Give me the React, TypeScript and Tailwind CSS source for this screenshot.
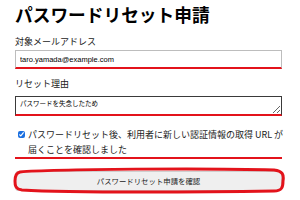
import React from "react";

export default function App() {
  return (
    <div className="w-[300px] h-[200px] bg-white overflow-hidden pl-[15px] pr-[18px] pt-[3px] text-[#1a1a1a] font-['Noto_Sans_CJK_JP','Noto_Sans',sans-serif]">
      <h1 className="text-[17.7px] leading-[22px] font-bold text-black">パスワードリセット申請</h1>
      <label className="block mt-[11px] text-[9px] leading-[12px]">対象メールアドレス</label>
      <input
        readOnly
        value="taro.yamada@example.com"
        className="mt-[2px] block w-full h-[19px] border border-[#bdbdbd] border-b-2 border-b-[#e3131b] px-[4px] text-[7.5px] text-black font-['Liberation_Sans',sans-serif] outline-none"
      />
      <label className="block mt-[9px] text-[9px] leading-[12px]">リセット理由</label>
      <textarea
        readOnly
        value="パスワードを失念したため"
        className="mt-[6px] block w-full h-[20px] border border-[#3a3a3a] border-b-2 border-b-[#e3131b] px-[4px] py-[2px] text-[6.5px] leading-[9px] text-black outline-none"
      />
      <div className="mt-[11px] flex items-start border-b-2 border-[#e3131b]">
        <input
          type="checkbox"
          checked
          readOnly
          className="ml-[3px] mt-[4px] w-[7px] h-[7px] shrink-0 accent-[#1a6fe0]"
        />
        <span className="ml-[3px] text-[9px] leading-[15px]">
          <span className="whitespace-nowrap">パスワードリセット後、利用者に新しい認証情報の取得 URL が</span>
          <br />
          届くことを確認しました
        </span>
      </div>
      <div className="relative mt-[12px]">
        <button className="block w-full h-[20px] bg-[#efefef] border border-[#cfcfcf] rounded-[3px] text-[7.4px] text-[#222]">
          パスワードリセット申請を確認
        </button>
        <svg
          className="absolute left-[-3px] top-[-4px] pointer-events-none"
          width="274"
          height="28"
          viewBox="0 0 274 28"
        >
          <path
            d="M 8 5 C 40 2, 200 1, 262 3 C 271 4, 272 8, 271 14 C 271 20, 270 24, 262 24 C 200 25, 60 26, 10 23 C 3 22, 3 18, 3 14 C 3 9, 4 6, 8 5 Z"
            fill="none"
            stroke="#e3131b"
            strokeWidth="3"
          />
        </svg>
      </div>
    </div>
  );
}
